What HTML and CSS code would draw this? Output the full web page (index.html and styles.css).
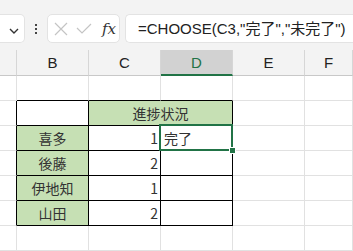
FILE: index.html
```html
<!DOCTYPE html>
<html lang="ja">
<head>
  <meta charset="UTF-8" />
  <title>CHOOSE</title>
  <link rel="stylesheet" href="styles.css">
</head>
<body>

  <!-- 数式バー -->
  <div class="toolbar">
    <div class="name-box"><span class="chevron">
      <svg width="10" height="6" viewBox="0 0 10 6"><path d="M1 1 L5 5 L9 1" fill="none" stroke="#333" stroke-width="1.4"/></svg>
    </span></div>
    <div class="dots"><i></i><i></i><i></i></div>
    <div class="fx-box">
      <svg width="14" height="14" viewBox="0 0 14 14"><path d="M1 1 L13 13 M13 1 L1 13" stroke="#c4c4c4" stroke-width="1.2"/></svg>
      <svg width="16" height="12" viewBox="0 0 16 12"><path d="M1 5 L6 10 L15 1" fill="none" stroke="#c4c4c4" stroke-width="1.2"/></svg>
      <span class="fx">fx</span>
    </div>
    <div class="formula">=CHOOSE(C3,"完了","未完了")</div>
  </div>

  <!-- シート -->
  <div class="sheet">
    <div class="cell head corner"></div>
    <div class="cell head">B</div>
    <div class="cell head">C</div>
    <div class="cell head active">D</div>
    <div class="cell head">E</div>
    <div class="cell head">F</div>

    <div class="cell"></div>
    <div class="cell bt"></div>
    <div class="cell bt"></div>
    <div class="cell bt"></div>
    <div class="cell"></div>
    <div class="cell"></div>

    <div class="cell bl"></div>
    <div class="cell tb"></div>
    <div class="cell tb green merged">進捗状況</div>
    <div class="cell"></div>
    <div class="cell"></div>

    <div class="cell bl"></div>
    <div class="cell tb green name">喜多</div>
    <div class="cell tb num">1</div>
    <div class="cell tb selected">完了<div class="selection"><span class="handle"></span></div></div>
    <div class="cell"></div>
    <div class="cell"></div>

    <div class="cell bl"></div>
    <div class="cell tb green name">後藤</div>
    <div class="cell tb num">2</div>
    <div class="cell tb"></div>
    <div class="cell"></div>
    <div class="cell"></div>

    <div class="cell bl"></div>
    <div class="cell tb green name">伊地知</div>
    <div class="cell tb num">1</div>
    <div class="cell tb"></div>
    <div class="cell"></div>
    <div class="cell"></div>

    <div class="cell bl"></div>
    <div class="cell tb green name">山田</div>
    <div class="cell tb num">2</div>
    <div class="cell tb"></div>
    <div class="cell"></div>
    <div class="cell"></div>

    <div class="cell"></div>
    <div class="cell"></div>
    <div class="cell"></div>
    <div class="cell"></div>
    <div class="cell"></div>
    <div class="cell"></div>
  </div>

</body>
</html>
```

FILE: styles.css
```css
body, html {
  margin: 0;
  height: 100%;
  overflow: hidden;
  background: #ffffff;
  font-family: "Liberation Sans", "Noto Sans CJK JP", sans-serif;
  color: #222;
}

.toolbar {
  height: 50px;
  background-color: #f3f3f3;
  display: flex;
  align-items: flex-start;
  padding-top: 14px;
  box-sizing: border-box;
  overflow: hidden;
}

.name-box {
  width: 25px;
  height: 29px;
  flex: none;
  background: #fff;
  border: 1px solid #e3e3e3;
  border-left: none;
  border-radius: 0 5px 5px 0;
  box-sizing: border-box;
  display: flex;
  align-items: center;
  justify-content: flex-end;
  padding-right: 5px;
}

.dots {
  width: 22px;
  height: 29px;
  flex: none;
  display: flex;
  flex-direction: column;
  align-items: center;
  justify-content: center;
  gap: 2px;
}

.dots i {
  width: 2px;
  height: 2px;
  background: #444;
  display: block;
}

.fx-box {
  width: 73px;
  height: 29px;
  flex: none;
  background: #fff;
  border: 1px solid #e3e3e3;
  border-radius: 5px;
  box-sizing: border-box;
  display: flex;
  align-items: center;
  padding-left: 6px;
  gap: 8px;
}

.fx {
  font-family: "DejaVu Serif", "Liberation Serif", serif;
  font-style: italic;
  font-size: 15px;
  color: #333;
  margin-left: 2px;
}

.formula {
  flex: 1;
  min-width: 0;
  height: 29px;
  margin-left: 5px;
  background: #fff;
  border: 1px solid #e3e3e3;
  border-right: none;
  border-radius: 5px 0 0 5px;
  box-sizing: border-box;
  padding-left: 12px;
  font-size: 15px;
  line-height: 27px;
  white-space: nowrap;
  overflow: hidden;
  color: #222;
}

.sheet {
  display: grid;
  grid-template-columns: 17px 72px 72px 72px 72px 1fr;
  grid-template-rows: 26px repeat(7, 25px);
  font-family: "Noto Sans CJK JP", sans-serif;
  font-size: 14px;
}

.cell {
  box-sizing: border-box;
  border-right: 1px solid #e1e1e1;
  border-bottom: 1px solid #e1e1e1;
  display: flex;
  align-items: center;
  padding: 0 3px;
  white-space: nowrap;
  line-height: 1;
  color: #333;
}

.head {
  background: #f3f3f3;
  border-right-color: #d6d6d6;
  border-bottom-color: #c8c8c8;
  justify-content: center;
  font-family: "Liberation Sans", sans-serif;
  font-size: 15px;
  color: #222;
}

.head.active {
  background: #d2d2d2;
  color: #217346;
  border-bottom: 2px solid #217346;
}

.bt {
  border-bottom-color: #000;
}

.bl {
  border-right-color: #000;
}

.tb {
  border-right-color: #000;
  border-bottom-color: #000;
}

.green {
  background: #c6e0b4;
}

.merged {
  grid-column: span 2;
  justify-content: center;
}

.name {
  justify-content: center;
}

.num {
  justify-content: flex-end;
  padding-right: 2px;
}

.selected {
  position: relative;
}

.selection {
  position: absolute;
  top: -2px;
  left: -2px;
  right: -1px;
  bottom: -1px;
  border: 2px solid #217346;
  box-sizing: border-box;
}

.handle {
  position: absolute;
  right: -5px;
  bottom: -5px;
  width: 5px;
  height: 5px;
  background: #217346;
  border: 1px solid #fff;
}
```
